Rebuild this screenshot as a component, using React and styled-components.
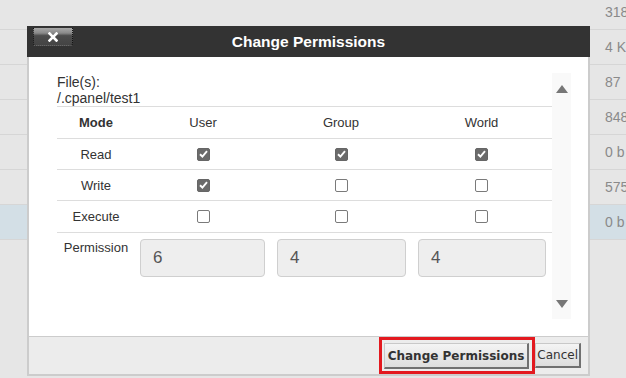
import React from "react";
import styled, { createGlobalStyle } from "styled-components";

const Global = createGlobalStyle`
  html, body { margin: 0; padding: 0; }
  body {
    width: 626px; height: 378px; overflow: hidden;
    background: #e6e6e6;
    font-family: "Liberation Sans", Arial, sans-serif;
  }
`;

const Page = styled.div`
  position: relative;
  width: 626px;
  height: 378px;
  overflow: hidden;
`;

const BgTable = styled.div`
  display: flex;
  flex-direction: column;
  margin-top: -5px;
`;

const BgRow = styled.div`
  height: 34px;
  border-bottom: 1px solid ${(p) => (p.$last ? "transparent" : "#d6d6d6")};
  background: ${(p) => (p.$active ? "#d3dfe6" : "transparent")};
  display: flex;
  align-items: center;
  padding-left: 605px;
  font-size: 14px;
  color: #8a8a8a;
  white-space: nowrap;
`;

const Dialog = styled.div`
  position: absolute;
  left: 27px;
  top: 26px;
  width: 563px;
  height: 350px;
  display: flex;
  flex-direction: column;
  background: #fff;
`;

const Header = styled.div`
  position: relative;
  height: 31px;
  flex: none;
  background: #333333;
  display: flex;
  align-items: center;
  justify-content: center;
  color: #fff;
  font-weight: bold;
  font-size: 15.5px;
`;

const CloseBtn = styled.button`
  position: absolute;
  left: 6px;
  top: 2px;
  width: 40px;
  height: 18px;
  padding: 0;
  border: 1px dotted #111;
  border-top: none;
  border-radius: 0 0 3px 3px;
  background: linear-gradient(#a8a8a8 0%, #8a8a8a 30%, #4d4d4d 45%, #444 100%);
  display: flex;
  align-items: center;
  justify-content: center;
`;

const Body = styled.div`
  flex: 1;
  display: flex;
  border-left: 2px solid #cccccc;
  border-right: 2px solid #cccccc;
  min-height: 0;
`;

const Content = styled.div`
  width: 495px;
  padding: 17px 0 0 28px;
  color: #333;
`;

const FileText = styled.div`
  font-size: 14px;
  line-height: 16px;
  color: #333;
`;

const Table = styled.div`
  border-top: 1px solid #dddddd;
  display: flex;
  flex-direction: column;
`;

const Row = styled.div`
  display: grid;
  grid-template-columns: 78px 136px 140px 141px;
  height: ${(p) => p.$h}px;
  align-items: ${(p) => (p.$top ? "start" : "center")};
  border-bottom: ${(p) => (p.$noline ? "none" : "1px solid #dddddd")};
  font-size: 13px;
`;

const Cell = styled.div`
  display: flex;
  justify-content: center;
  align-items: center;
  font-weight: ${(p) => (p.$bold ? "bold" : "normal")};
  padding: ${(p) => p.$pad || "0"};
  color: #333;
`;

const Box = styled.span`
  width: 13px;
  height: 13px;
  box-sizing: border-box;
  border-radius: 2px;
  border: 1px solid ${(p) => (p.$on ? "#666" : "#7a7a7a")};
  background: ${(p) => (p.$on ? "#6b6b6b" : "#fff")};
  display: flex;
  align-items: center;
  justify-content: center;
`;

const Check = ({ on }) => (
  <Box $on={on}>
    {on && (
      <svg width="9" height="8" viewBox="0 0 9 8">
        <path d="M1 4.2 L3.4 6.5 L8 1.2" stroke="#fff" strokeWidth="1.9" fill="none" />
      </svg>
    )}
  </Box>
);

const PermInput = styled.div`
  width: 100%;
  height: 38px;
  box-sizing: border-box;
  background: #eeeeee;
  border: 1px solid #cfcfcf;
  border-radius: 4px;
  padding-left: 12px;
  display: flex;
  align-items: center;
  font-size: 17px;
  color: #555;
`;

const Scroll = styled.div`
  width: 19px;
  margin-top: 16px;
  height: 246px;
  background: #f9f9f9;
  display: flex;
  flex-direction: column;
  justify-content: space-between;
  align-items: center;
  padding: 12px 0 11px;
  box-sizing: border-box;
`;

const Arrow = styled.span`
  width: 0;
  height: 0;
  border-left: 6px solid transparent;
  border-right: 6px solid transparent;
  ${(p) =>
    p.$down
      ? "border-top: 8px solid #777;"
      : "border-bottom: 8px solid #777;"}
`;

const Footer = styled.div`
  height: 37px;
  flex: none;
  background: #ececec;
  border: 2px solid #cccccc;
  border-top: 1px solid #cccccc;
  display: flex;
  align-items: center;
  justify-content: flex-end;
  padding-right: 7px;
`;

const Highlight = styled.span`
  border: 3px solid #e3191f;
  padding: 3px 3px 2px 2px;
  display: flex;
`;

const Btn = styled.button`
  font-family: "DejaVu Sans", Verdana, sans-serif;
  font-size: 12px;
  font-weight: ${(p) => (p.$primary ? "bold" : "normal")};
  height: ${(p) => (p.$primary ? 26 : 25)}px;
  padding: 0 ${(p) => (p.$primary ? 3 : 1)}px;
  color: #333;
  background: linear-gradient(#f4f4f4, #dddddd);
  border: 1px solid;
  border-color: #c8c8c8 #707070 #707070 #c8c8c8;
  border-width: 1px 2px 2px 1px;
  margin: 0;
`;

const bgValues = ["318", "4 K", "87", "848", "0 b", "575", "0 b", ""];
const rows = [
  { label: "Read", v: [true, true, true] },
  { label: "Write", v: [true, false, false] },
  { label: "Execute", v: [false, false, false] },
];

export default function App() {
  return (
    <Page>
      <Global />
      <BgTable>
        {bgValues.map((v, i) => (
          <BgRow key={i} $active={i === 6} $last={i === 7}>
            {v}
          </BgRow>
        ))}
      </BgTable>
      <Dialog>
        <Header>
          <CloseBtn aria-label="close">
            <svg width="10" height="10" viewBox="0 0 10 10">
              <path d="M1.5 1.5 L8.5 8.5 M8.5 1.5 L1.5 8.5" stroke="#fff" strokeWidth="2.6" strokeLinecap="square" />
            </svg>
          </CloseBtn>
          Change Permissions
        </Header>
        <Body>
          <Content>
            <FileText>File(s):</FileText>
            <FileText>/.cpanel/test1</FileText>
            <Table>
              <Row $h={31}>
                <Cell $bold>Mode</Cell>
                <Cell>User</Cell>
                <Cell>Group</Cell>
                <Cell>World</Cell>
              </Row>
              {rows.map((r, i) => (
                <Row key={r.label} $h={i === 2 ? 31 : 30}>
                  <Cell>{r.label}</Cell>
                  {r.v.map((on, j) => (
                    <Cell key={j}>
                      <Check on={on} />
                    </Cell>
                  ))}
                </Row>
              ))}
              <Row $h={50} $top $noline>
                <Cell $pad="7px 0 0">Permission</Cell>
                <Cell $pad="6px 6px 0 5px"><PermInput>6</PermInput></Cell>
                <Cell $pad="6px 5px 0 6px"><PermInput>4</PermInput></Cell>
                <Cell $pad="6px 6px 0 7px"><PermInput>4</PermInput></Cell>
              </Row>
            </Table>
          </Content>
          <Scroll>
            <Arrow />
            <Arrow $down />
          </Scroll>
        </Body>
        <Footer>
          <Highlight>
            <Btn $primary>Change Permissions</Btn>
          </Highlight>
          <Btn>Cancel</Btn>
        </Footer>
      </Dialog>
    </Page>
  );
}
